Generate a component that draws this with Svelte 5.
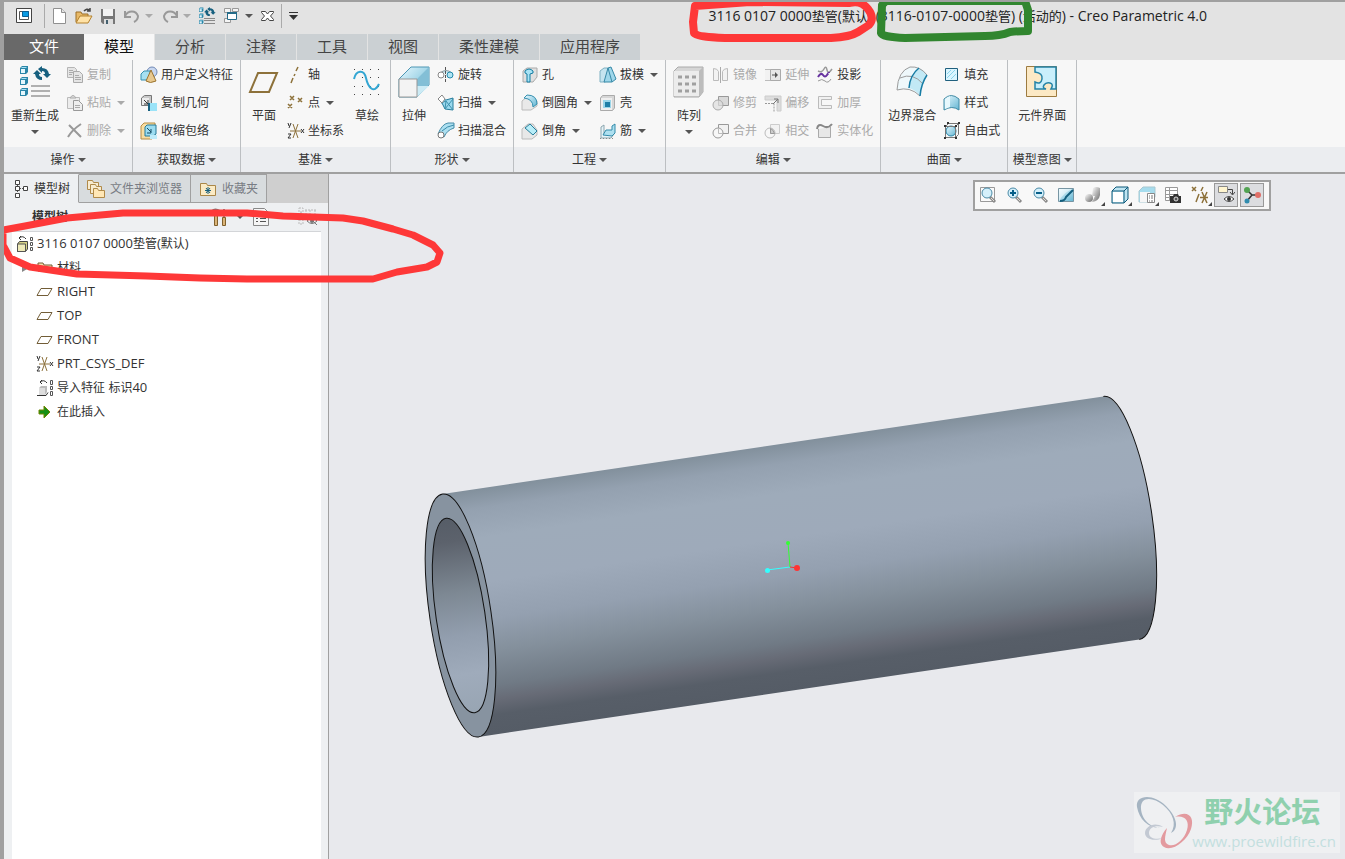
<script lang="ts">
    type Item = { icon: string; label: string; menu?: boolean; off?: boolean };
    type Block = { big?: Item; rows?: Item[] };
    type Group = { name: string; blocks: Block[] };

    const ribbonTabs = ['文件', '模型', '分析', '注释', '工具', '视图', '柔性建模', '应用程序'];
    let activeTab = $state('模型');

    const groups: Group[] = [
        {
            name: '操作',
            blocks: [
                { big: { icon: 'regen', label: '重新生成', menu: true } },
                { rows: [
                    { icon: 'copy', label: '复制', off: true },
                    { icon: 'paste', label: '粘贴', menu: true, off: true },
                    { icon: 'remove', label: '删除', menu: true, off: true }
                ] }
            ]
        },
        {
            name: '获取数据',
            blocks: [
                { rows: [
                    { icon: 'udf', label: '用户定义特征' },
                    { icon: 'copyGeom', label: '复制几何' },
                    { icon: 'shrink', label: '收缩包络' }
                ] }
            ]
        },
        {
            name: '基准',
            blocks: [
                { big: { icon: 'planeBig', label: '平面' } },
                { rows: [
                    { icon: 'axis', label: '轴' },
                    { icon: 'points', label: '点', menu: true },
                    { icon: 'csys', label: '坐标系' }
                ] },
                { big: { icon: 'sketch', label: '草绘' } }
            ]
        },
        {
            name: '形状',
            blocks: [
                { big: { icon: 'extrude', label: '拉伸' } },
                { rows: [
                    { icon: 'revolve', label: '旋转' },
                    { icon: 'sweep', label: '扫描', menu: true },
                    { icon: 'sweptBlend', label: '扫描混合' }
                ] }
            ]
        },
        {
            name: '工程',
            blocks: [
                { rows: [
                    { icon: 'hole', label: '孔' },
                    { icon: 'round', label: '倒圆角', menu: true },
                    { icon: 'chamfer', label: '倒角', menu: true }
                ] },
                { rows: [
                    { icon: 'draft', label: '拔模', menu: true },
                    { icon: 'shell', label: '壳' },
                    { icon: 'rib', label: '筋', menu: true }
                ] }
            ]
        },
        {
            name: '编辑',
            blocks: [
                { big: { icon: 'pattern', label: '阵列', menu: true } },
                { rows: [
                    { icon: 'mirror', label: '镜像', off: true },
                    { icon: 'trim', label: '修剪', off: true },
                    { icon: 'merge', label: '合并', off: true }
                ] },
                { rows: [
                    { icon: 'extend', label: '延伸', off: true },
                    { icon: 'offset', label: '偏移', off: true },
                    { icon: 'intersect', label: '相交', off: true }
                ] },
                { rows: [
                    { icon: 'project', label: '投影' },
                    { icon: 'thicken', label: '加厚', off: true },
                    { icon: 'solidify', label: '实体化', off: true }
                ] }
            ]
        },
        {
            name: '曲面',
            blocks: [
                { big: { icon: 'boundary', label: '边界混合' } },
                { rows: [
                    { icon: 'fill', label: '填充' },
                    { icon: 'style', label: '样式' },
                    { icon: 'freestyle', label: '自由式' }
                ] }
            ]
        },
        {
            name: '模型意图',
            blocks: [{ big: { icon: 'interface', label: '元件界面' } }]
        }
    ];

    const treeItems = [
        { icon: 'planeSmall', label: 'RIGHT' },
        { icon: 'planeSmall', label: 'TOP' },
        { icon: 'planeSmall', label: 'FRONT' },
        { icon: 'csys', label: 'PRT_CSYS_DEF' },
        { icon: 'imported', label: '导入特征 标识40' },
        { icon: 'insert', label: '在此插入' }
    ];

    const viewTools = [
        { icon: 'refit', label: '重新调整' },
        { icon: 'zoomIn', label: '放大' },
        { icon: 'zoomOut', label: '缩小' },
        { icon: 'repaint', label: '重画' },
        { icon: 'render', label: '渲染', menu: true },
        { icon: 'display', label: '显示样式', menu: true },
        { icon: 'saved', label: '已保存方向', menu: true },
        { icon: 'viewMgr', label: '视图管理器' },
        { icon: 'datums', label: '基准显示', menu: true },
        { icon: 'notes', label: '注释显示', on: true },
        { icon: 'spin', label: '旋转中心', on: true }
    ];

    // small glyphs are 18x18, the ones for tall buttons 32x32
    const cube = (x: number, y: number) =>
        `<path d="M${x} ${y + 2}l2-2h6v6l-2 2h-6z" fill="#2a86a8"/><path d="M${x + 1} ${y + 3}h4v4h-4z" fill="#e4f7fd"/><path d="M${x + 1} ${y + 2}l1-1h5l-1 1z" fill="#a5dff3"/>`;
    const recycle = '<path d="M0 8L4 4 8 8H6Q6 11 9 11V14Q3 14 2 8zM18 8L14 12 10 8H12Q12 5 9 5V7L5 3 9 0V2Q15 2 16 8z" fill="#17607f"/>';
    const lens = '<path d="M11 11l5 5" stroke="#8a8a8a" stroke-width="3"/><path d="M12 12l3 3" stroke="#e0dcd6"/><circle cx="8" cy="7" r="5" fill="#d5f0fb" stroke="#4a8aa6"/>';

    const icons: Record<string, string> = {
        app: '<path d="M1.500 1.500h15v14h-15z" fill="#fff" stroke="#444"/><path d="M4.500 4.500h9v8h-9z" fill="#fff" stroke="#555"/><path d="M7.500 4.500h6v5h-6z" fill="#0a9be3" stroke="#0b5f94"/>',
        file: '<path d="M2.500 1.500h8l4 4v11h-12z" fill="#fff" stroke="#909090"/><path d="M10.500 1.500v4h4" fill="#e5e5e5" stroke="#909090"/>',
        open: '<path d="M1 15V5h5l1 2h6v3" fill="#e8b967" stroke="#9b6f27"/><path d="M1 16l4-7h12l-4 7z" fill="#ffe2a6" stroke="#b4822f"/><path d="M9 4q3-3 5-1M15 1v3h-3" fill="none" stroke="#444" stroke-width="1.500"/>',
        save: '<path d="M2 2h14v15H4l-2-2z" fill="#777"/><path d="M4 2h10v7H4z" fill="#f2f2f2"/><path d="M5 12h9v5H5z" fill="#ddd"/><path d="M7 13h2v4H7z" fill="#44606f"/>',
        undo: '<path d="M2 4v6h6" fill="none" stroke="#999" stroke-width="2"/><path d="M2 9C5 3 13 3 15 9q0 4-4 6" fill="none" stroke="#999" stroke-width="2"/>',
        redo: '<path d="M16 4v6h-6" fill="none" stroke="#999" stroke-width="2"/><path d="M16 9C13 3 5 3 3 9q0 4 4 6" fill="none" stroke="#999" stroke-width="2"/>',
        regenSmall: `<g transform="scale(.55)">${cube(0, 1)}${cube(0, 12)}${cube(0, 23)}</g><g transform="translate(5 0) scale(.65)">${recycle}</g><path d="M5 11.500h11M5 13.500h11M5 16.500h11" stroke="#888"/>`,
        windows: '<path d="M1.500 1.500h6v4h-6zM1.500 11.500h6v4h-6zM9.500 1.500h6v3h-6z" fill="#f5f5f5" stroke="#999"/><path d="M4.500 5.500h9v7h-9z" fill="#fff" stroke="#246b88"/><path d="M4 6h10" stroke="#246b88" stroke-width="2"/>',
        close: '<path d="M2.500 4.500h4L8.500 7l2-2.500h4v1L11.500 9l3 3.500v1h-4l-2-2.500-2 2.500h-4v-1L5.500 9l-3-3.500z" fill="#fff" stroke="#444"/>',
        menu: '<path d="M1 5.500h9" stroke="#333"/><path d="M1 8h9l-4.500 5z" fill="#333"/>',
        regen: `${cube(1, 0)}${cube(1, 11)}${cube(1, 22)}<g transform="translate(14)">${recycle}</g><path d="M12 20h19M12 25h19M12 30h19" stroke="#999" stroke-width="1.500"/>`,
        copy: '<path d="M1.500 1.500h7l2 2v8h-9z" fill="#e5e5e5" stroke="#b5b5b5"/><path d="M7.500 5.500h6l3 3v8h-9z" fill="#e5e5e5" stroke="#aaa"/><path d="M3 4.500h4M3 6.500h4M3 8.500h3M9 9.500h4M9 11.500h6M9 13.500h6" stroke="#aaa"/>',
        paste: '<path d="M1.500 3.500h12v11h-12z" fill="#ececec" stroke="#bbb"/><path d="M4 4q3-5 6 0z" fill="#ddd" stroke="#aaa"/><path d="M7.500 6.500h5l4 4v6h-9z" fill="#eee" stroke="#999"/><path d="M9 11.500h5M9 13.500h5" stroke="#aaa"/>',
        remove: '<path d="M3 3l12 12M15 2Q6 8 2 15" stroke="#999" stroke-width="2" fill="none"/>',
        udf: '<circle cx="12" cy="6" r="5" fill="#c9d7ef" stroke="#7089b5"/><path d="M1 8l3-3h6v7l-3 2H1z" fill="#a6e0f1" stroke="#3590b0"/><path d="M11 4L6 15q4 3 10 0z" fill="#e8c88e" stroke="#9b742f"/>',
        copyGeom: '<path d="M1.500 4l3-2.500h7V9l-3 2.500h-7z" fill="#c9c9c9" stroke="#777"/><path d="M2 4h7v7H2z" fill="#ededed"/><path d="M4 6l4 4M8 6v4H4" stroke="#333" fill="none"/><path d="M9 9h8v8H9z" fill="#9be3f8"/><path d="M9 9v8" stroke="#17607f" stroke-width="2"/>',
        shrink: '<path d="M1 4l3-3h11v12l-3 4H1z" fill="#f8dda1" stroke="#b58d45"/><path d="M5 5l2-2h9v9l-3 2H5z" fill="#9bdcf0" stroke="#257a9a"/><path d="M7 6l4 4M11 7v4H7" stroke="#124b63" fill="none"/><path d="M10 13h7v4h-7z" fill="#bdebf9"/>',
        planeBig: '<path d="M10 7h19l-8 19H2z" fill="none" stroke="#8d713a" stroke-width="2"/>',
        planeSmall: '<path d="M5 5.500h11l-4 7H1z" fill="none" stroke="#725d37"/>',
        axis: '<path d="M11 1L9 5M8 8l-1 2M6 12l-2 5" stroke="#8d713a" stroke-width="1.500"/>',
        points: '<path d="M3 2l4 4M7 2L3 6M11 4l4 4M15 4l-4 4M1 10l4 4M5 10l-4 4" stroke="#8d713a" stroke-width="1.500"/>',
        csys: '<path d="M3 9h11M6 2l5 14M11 2L6 16" stroke="#8d713a" fill="none"/><path d="M1 1l1 3M4 1L2 6M1 12h3l-3 4h3M14 7l3 4M17 7l-3 4" stroke="#333" fill="none"/>',
        sketch: '<path d="M3 3.500h27M3 11.500h27M3 20.500h27M3 28.500h27" stroke="#444" stroke-dasharray="1 7"/><path d="M3 13C5 4 13 3 15 12S23 29 28 18" fill="none" stroke="#33a6d3" stroke-width="2"/>',
        extrude: '<path d="M1 13L13 1h18v18L19 31H1z" fill="url(#blue)" stroke="#4d96b3"/><path d="M19 13L31 1v18L19 31z" fill="#83bfd6"/><path d="M19 31V20h12z" fill="#ccebf5"/><path d="M1 13h18v18H1z" fill="#f3f3f3" stroke="#999"/>',
        revolve: '<path d="M3 7q6-5 12 0" fill="#cdeaf4" stroke="#8a9aa0"/><circle cx="4" cy="9" r="3" fill="#fff" stroke="#888"/><circle cx="13" cy="9" r="3" fill="#afe5f5" stroke="#258aaa"/><path d="M8.500 1v16" stroke="#555" stroke-dasharray="3 1"/>',
        sweep: '<path d="M3 5l6 1 7-2v12l-8-1z" fill="#9bd9ee" stroke="#257c9b"/><path d="M4 9l5-2 7 9M9 7l-1 8 8-10" fill="none" stroke="#3e91ad"/><path d="M1 5l4-4 3 4-3 4z" fill="#fff" stroke="#888"/>',
        sweptBlend: '<path d="M1 12Q5 2 11 1h6v5q-7 2-10 9z" fill="#acdff0" stroke="#468da9"/><path d="M5 9Q10 4 17 3" fill="none" stroke="#398caa"/><circle cx="4" cy="13" r="3" fill="#fff" stroke="#777"/>',
        hole: '<path d="M2 5l4-3h10v9l-4 5H2z" fill="#e0e0e0" stroke="#aaa"/><path d="M4 5q4-4 8 0v2L9 8v8H6V8L4 7z" fill="#a8e3f5" stroke="#147da2"/>',
        round: '<path d="M1 7l6-5h4l5 5v5l-6 4H1z" fill="#e9e9e9" stroke="#bbb"/><path d="M6 1q10 0 10 9l-4 3Q12 5 3 4z" fill="url(#blue)" stroke="#3590b0"/>',
        chamfer: '<path d="M1 7l6-5h5l4 6v5l-5 4H1z" fill="#e8e8e8" stroke="#bbb"/><path d="M9 2l7 7-4 4-8-7z" fill="#b8edf8" stroke="#287f9c"/>',
        draft: '<path d="M1 5l4-3h4v12l-3 2H1z" fill="#c5e4ef" stroke="#7fb0c2"/><path d="M9 2l3-1 5 12-4 3H5z" fill="#9fd7ea" stroke="#3789a7"/><path d="M9 2l4 14" fill="none" stroke="#3789a7"/>',
        shell: '<path d="M1.500 4l2-2.500h12V14l-2 2.500h-12z" fill="#d6d6d6" stroke="#aaa"/><path d="M2 4h11v12H2z" fill="#efefef"/><path d="M4 6h8v8H4z" fill="#9ad5e9"/><path d="M6 8h5v5H6z" fill="#1f7ea6"/>',
        rib: '<path d="M2 15V5l3-2v9h10l-3 4H2z" fill="#e6f3f8" stroke="#8ba5ae"/><path d="M4 13l3-5h6V4l3-2v9l-3 3z" fill="#aee0f0" stroke="#328baa"/><path d="M1 16.500h15" stroke="#888" stroke-dasharray="1 2"/>',
        pattern: '<path d="M1 5l4-4h25v25l-4 5H1z" fill="#d6d6d6" stroke="#aaa"/><path d="M1 5h25v25H1z" fill="#ececec"/><path d="M26 5l4-4v25l-4 5z" fill="#bcbcbc"/><path d="M5 11h4M12 11h4M19 11h4M5 18h4M12 18h4M19 18h4M5 25h4M12 25h4M19 25h4" stroke="#a0a0a0" stroke-width="3"/>',
        mirror: '<path d="M1.500 2.500q4 0 5 3v9h-5zM15.500 2.500q-4 0-5 3v9h5z" fill="#f2f2f2" stroke="#bbb"/><path d="M8.500 1v16" stroke="#aaa"/>',
        trim: '<path d="M6.500 2.500h10v9h-10z" fill="#d9d9d9" stroke="#999"/><circle cx="6" cy="11" r="5" fill="#ddd" fill-opacity=".7" stroke="#aaa"/>',
        merge: '<path d="M6.500 2.500h10v9h-10z" fill="#f1f1f1" stroke="#999"/><circle cx="6" cy="11" r="5" fill="#f7f7f7" stroke="#999"/><path d="M6.500 7v4.500h4" fill="none" stroke="#bbb"/>',
        extend: '<path d="M1 3.500h6v11H1" fill="#f2f2f2" stroke="#bbb"/><path d="M6.500 3.500h10v11h-10z" fill="#e7e7e7" stroke="#aaa"/><path d="M8 9h4" stroke="#555"/><path d="M11 6l3 3-3 3z" fill="#555"/>',
        offset: '<path d="M1 2h16v15h-4V6H1z" fill="#ddd" stroke="#ccc"/><path d="M1 9.500h9v8" fill="none" stroke="#999" stroke-dasharray="2 1"/><path d="M9 10l5-5M10 5h4v4" fill="none" stroke="#777"/>',
        intersect: '<path d="M6.500 2.500h9v9h-9z" fill="#f2f2f2" stroke="#ccc"/><circle cx="6" cy="11" r="5" fill="none" stroke="#bbb"/><path d="M6.500 6.500v5h4q-1-4-4-5z" fill="#ccc" stroke="#999"/>',
        project: '<path d="M2 5q4 2 6-2t3 1 5-1" fill="none" stroke="#999" stroke-width="1.500"/><path d="M2 11q3-5 5-2t4 0 2-2" fill="none" stroke="#6732a0" stroke-width="2"/><path d="M2 15q4-3 7 0t6-2" fill="none" stroke="#999"/>',
        thicken: '<path d="M2.500 2.500h13v3h-10v6h10v3h-13z" fill="#f1f1f1" stroke="#bbb"/>',
        solidify: '<path d="M2.500 7v8.500h12V5" fill="#e7e7e7" stroke="#aaa"/><path d="M1 7q1-6 6-3t9-2" fill="none" stroke="#888" stroke-width="2"/>',
        boundary: '<path d="M1 24Q2 5 14 1q10-1 17 8-6 11-7 21Q15 21 1 24z" fill="#eef8fb"/><path d="M24 30Q25 17 31 9 28 4 23 2 14 9 13 22q7 2 11 8z" fill="#c2e9f5"/><path d="M1 24Q2 5 14 1q10-1 17 8M1 24q13-4 23 6M4 12q13-6 23 6" fill="none" stroke="#9b9b9b"/><path d="M24 30Q25 18 31 9M13 22q1-13 10-20" fill="none" stroke="#177ca4" stroke-width="1.500"/>',
        fill: '<path d="M2.500 2.500h12v12h-12z" fill="#d9f5ff" stroke="#20607e"/><path d="M4 8l4-4M4 12l8-8M8 13l5-5" stroke="#8bd4ec"/>',
        style: '<path d="M1 5q7-7 15 0v11q-7-5-15 0z" fill="url(#blue)" stroke="#418ba5"/><path d="M2 5v10l5-2V2z" fill="#e7f8fd"/>',
        freestyle: '<circle cx="8" cy="9" r="5" fill="url(#blue)" stroke="#2784a6"/><path d="M2.500 4.500l3-3h10v11l-3 3h-10zM2.500 4.500h10v11M12.500 4.500l3-3" fill="none" stroke="#777"/><path d="M1 3h2v2H1zM12 3h2v2h-2zM1 15h2v2H1zM12 15h2v2h-2zM4 0h2v2H4zM15 0h2v2h-2z" fill="#333"/>',
        interface: '<path d="M.5.500h30v30H.5z" fill="#fce9c5" stroke="#9d7b40"/><path d="M9 1h21v22h-5q3-5-1-6t-6 2 2 4H9v-7q6 3 7-3T9 6z" fill="#c9effb" stroke="#2383a7" stroke-width="1.500"/>',
        treeTab: '<path d="M3.500.500h4v4h-4zM3.500 6.500h4v4h-4zM3.500 13.500h4v4h-4zM11.500 6.500h4v4h-4z" fill="#fff" stroke="#444"/><path d="M5.500 5v2M5.500 11v3M8 8.500h4" stroke="#555" stroke-dasharray="1 1"/>',
        folders: '<path d="M.5 9.500v-9h5l1 2h5v7z" fill="#f8ecd0" stroke="#b08a49"/><path d="M3.500 13.500v-9h5l1 2h5v7z" fill="#f8ecd0" stroke="#b08a49"/><path d="M6.500 17.500v-9h4l1 2h6v7z" fill="#ffe7b5" stroke="#b08a49"/>',
        favorite: '<path d="M1.500 15.500v-12h6l1 2h8v10z" fill="#fbebc5" stroke="#aa8748"/><path d="M9 7v7M6 10.500h6M7 8l4 5M11 8l-4 5" stroke="#17607f"/>',
        part: '<path d="M1.500 9l2-2.500h8V14l-2 2.500h-8z" fill="#d6d287" stroke="#444"/><path d="M1.500 9h8v7.500h-8z" fill="#eeeab8" stroke="#555"/><path d="M3 3q4-3 7 1M5 1L3 3l2 2" fill="none" stroke="#333"/><path d="M14.500 2.500h2v3h-2zM14.500 7.500h2v3h-2zM14.500 12.500h2v3h-2z" fill="none" stroke="#555"/>',
        imported: '<path d="M3 9l2-2h6v6l-2 3H3z" fill="#bbb"/><path d="M3 9h6v7H3z" fill="#ddd"/><path d="M4 3q4-3 7 1M6 1L4 3l2 2M1 16.500h9l2-3" fill="none" stroke="#333"/><path d="M14.500 1.500h2v4h-2zM14.500 7.500h2v3h-2zM14.500 12.500h2v4h-2z" fill="none" stroke="#555"/>',
        insert: '<path d="M3 7h5V3l6 6-6 6v-4H3z" fill="#169016" stroke="#6f8500"/>',
        material: '<path d="M2 12V4h5l1 2h8v7z" fill="#f2dfa8" stroke="#725d37"/>',
        tools: '<path d="M2 3q3-3 8 0M6 3v3" stroke="#777" fill="none" stroke-width="2"/><path d="M4.500 5.500h3v12h-3zM12.500 9.500h3v8h-3z" fill="#d9b377" stroke="#80602c"/><path d="M14 1v8" stroke="#888" stroke-width="2"/>',
        list: '<path d="M1.500.500h11l4 4v13h-15z" fill="#f5f5f5" stroke="#888"/><path d="M4 10.500h2M4 13.500h2M8 10.500h6M8 13.500h6M4 6.500h8" stroke="#555"/>',
        hidden: '<path d="M1 1h4v4H1zM1 13h4v4H1zM3 5v8M7 3h12M8 3v10M12 3v6M17 3v5" fill="none" stroke="#bbb" stroke-dasharray="2 1"/><path d="M9 14q5-6 10 0-5 5-10 0zM10 9l9 9" fill="none" stroke="#777"/><circle cx="14" cy="14" r="2" fill="#777"/>',
        refit: '<path d="M1.500 1.500h14v14h-14z" fill="#fafafa" stroke="#999"/>' + lens,
        zoomIn: lens + '<path d="M5 7h6M8 4v6" stroke="#075f89" stroke-width="2"/>',
        zoomOut: lens + '<path d="M5 7h6" stroke="#075f89" stroke-width="2"/>',
        repaint: '<path d="M1.500 2.500h15v13h-15z" fill="url(#blue)" stroke="#7795a3"/><path d="M2 3h14Q8 5 2 15z" fill="#fff" fill-opacity=".5"/><path d="M3 15q5 0 6-4l7-7" fill="none" stroke="#14607f" stroke-width="2"/>',
        render: '<circle cx="5" cy="12" r="4" fill="url(#steel)"/><path d="M9 2q3-2 7 0v7q-1 6-8 7l3-6H8z" fill="url(#steel)"/>',
        display: '<path d="M1 5l4-4h12v12l-4 4H1z" fill="#bfe5f2" stroke="#0d5879"/><path d="M1 5h12v12M13 5l4-4" fill="none" stroke="#0d5879"/><path d="M2 6h10v10H2z" fill="#fff"/>',
        saved: '<path d="M1 5l4-4h12v10l-4 5H1z" fill="#a6dced" stroke="#a7c8d1"/><path d="M2 6h10v10H2z" fill="#f6f6f6"/><path d="M9.500 7.500h7v9h-7z" fill="#fff" stroke="#888"/><path d="M11 10h1M11 12h1M11 15h1M13 10h2M13 12h2M13 15h2" stroke="#777"/>',
        viewMgr: '<path d="M1.500 1.500h12v13h-12zM1 4.500h13M5.500 1v14M1 8.500h13M1 11.500h13" fill="#fff" stroke="#999"/><path d="M6 10h3l1-2h4l1 2h2v7H6z" fill="#333"/><circle cx="12" cy="13" r="2" fill="#555" stroke="#ddd"/>',
        datums: '<path d="M1 1l4 4M5 1L1 5M12 1l-2 4M8 8l-3 8M9 11.500h8M11 6l5 11M16 6l-5 11" stroke="#8d713a" stroke-width="1.500"/>',
        notes: '<path d="M1.500.500h9v6h-9z" fill="#fff5cf" stroke="#888"/><path d="M11 3.500h4.500V8M13 6l2.500 3L18 6" fill="none" stroke="#444"/><path d="M7 13q5-5 10 0-5 5-10 0z" fill="#fff" stroke="#444"/><circle cx="12" cy="13" r="2" fill="#333"/>',
        spin: '<path d="M4 4l5 5-5 6M9 9h7" fill="none" stroke="#333" stroke-width="1.500"/><circle cx="4" cy="4" r="3" fill="#52a352"/><circle cx="4" cy="15" r="2.500" fill="#318cae"/><circle cx="15" cy="9" r="3" fill="#e06f68"/>'
    };

    // latin and CJK runs have different optical sizes
    function runs(text: string) {
        return text.split(/([\u4e00-\u9fff]+)/).filter((t) => t);
    }
</script>

{#snippet glyph(name: string, size = 18)}
    <svg width={size} height={size} viewBox="0 0 {size} {size}" aria-hidden="true">{@html icons[name]}</svg>
{/snippet}

{#snippet mixed(text: string)}
    <span>{#each runs(text) as run}{#if /[\u4e00-\u9fff]/.test(run)}{run}{:else}<span class="latin">{run}</span>{/if}{/each}</span>
{/snippet}

<svg class="defs" aria-hidden="true">
    <linearGradient id="blue" x1="0" y1="0" x2="1" y2="1">
        <stop offset="0" stop-color="#e9f9ff" />
        <stop offset="1" stop-color="#62b5d2" />
    </linearGradient>
    <linearGradient id="steel" x1="0" y1="0" x2="1" y2="1">
        <stop offset="0" stop-color="#fff" />
        <stop offset="1" stop-color="#666" />
    </linearGradient>
</svg>

<div class="window">
    <header class="titlebar">
        <button class="quick app" aria-label="窗口">{@render glyph('app')}</button>
        <i class="sep"></i>
        <button class="quick" aria-label="新建">{@render glyph('file')}</button>
        <button class="quick" aria-label="打开">{@render glyph('open')}</button>
        <button class="quick" aria-label="保存">{@render glyph('save')}</button>
        <button class="quick drop" aria-label="撤消" disabled>{@render glyph('undo')}<i class="caret"></i></button>
        <button class="quick drop" aria-label="重做" disabled>{@render glyph('redo')}<i class="caret"></i></button>
        <button class="quick" aria-label="重新生成">{@render glyph('regenSmall')}</button>
        <button class="quick drop" aria-label="窗口列表">{@render glyph('windows')}<i class="caret"></i></button>
        <button class="quick close" aria-label="关闭">{@render glyph('close')}</button>
        <i class="sep"></i>
        <button class="quick" aria-label="自定义">{@render glyph('menu')}</button>
        <h1>{@render mixed('3116 0107 0000垫管(默认) (3116-0107-0000垫管) (活动的) - Creo Parametric 4.0')}</h1>
    </header>

    <nav class="tabs">
        {#each ribbonTabs as tab}
            <button class:file={tab === '文件'} class:active={tab === activeTab} onclick={() => (activeTab = tab)}>{tab}</button>
        {/each}
    </nav>

    <div class="ribbon">
        {#each groups as group}
            <section class="group">
                <div class="tools">
                    {#each group.blocks as block}
                        {#if block.big}
                            <button class="big">
                                {@render glyph(block.big.icon, 32)}
                                <span>{block.big.label}</span>
                                {#if block.big.menu}<i class="caret"></i>{/if}
                            </button>
                        {:else if block.rows}
                            <div class="rows">
                                {#each block.rows as item}
                                    <button class="small" disabled={item.off}>
                                        {@render glyph(item.icon)}
                                        <span>{item.label}</span>
                                        {#if item.menu}<i class="caret"></i>{/if}
                                    </button>
                                {/each}
                            </div>
                        {/if}
                    {/each}
                </div>
                <button class="group-name">{group.name}<i class="caret"></i></button>
            </section>
        {/each}
        <div class="rest"></div>
    </div>

    <main>
        <aside>
            <div class="side-tabs">
                <button class="active">{@render glyph('treeTab')}模型树</button>
                <button>{@render glyph('folders')}文件夹浏览器</button>
                <button>{@render glyph('favorite')}收藏夹</button>
            </div>
            <div class="side-head">
                <h2>模型树</h2>
                <button class="settings" aria-label="设置">{@render glyph('tools')}<i class="caret"></i></button>
                <button aria-label="显示">{@render glyph('list')}</button>
                <button class="last" aria-label="隐藏" disabled>{@render glyph('hidden', 20)}</button>
            </div>
            <ul>
                <li class="root">{@render glyph('part')}{@render mixed('3116 0107 0000垫管(默认)')}</li>
                <li class="folder"><i class="twisty"></i>{@render glyph('material')}<span>材料</span></li>
                {#each treeItems as item}
                    <li>{@render glyph(item.icon)}{@render mixed(item.label)}</li>
                {/each}
            </ul>
        </aside>

        <div class="canvas">
            <svg class="model" width="750" height="360" viewBox="420 385 750 360" role="img" aria-label="垫管">
                <defs>
                    <linearGradient id="outer" gradientUnits="userSpaceOnUse" x1="0" y1="-123" x2="0" y2="123">
                        <stop offset="0" stop-color="#82909c" />
                        <stop offset=".08" stop-color="#94a1b0" />
                        <stop offset=".2" stop-color="#9eabba" />
                        <stop offset=".38" stop-color="#9eaaba" />
                        <stop offset=".53" stop-color="#94a0b0" />
                        <stop offset=".66" stop-color="#84909c" />
                        <stop offset=".8" stop-color="#707a85" />
                        <stop offset=".86" stop-color="#676b76" />
                        <stop offset=".92" stop-color="#575e68" />
                        <stop offset="1" stop-color="#555c66" />
                    </linearGradient>
                    <linearGradient id="inner" gradientUnits="userSpaceOnUse" x1="0" y1="-98" x2="0" y2="98">
                        <stop offset="0" stop-color="#565d67" />
                        <stop offset=".12" stop-color="#5c626c" />
                        <stop offset=".38" stop-color="#7d8893" />
                        <stop offset=".6" stop-color="#929eae" />
                        <stop offset=".8" stop-color="#9fabbb" />
                        <stop offset="1" stop-color="#98a5b3" />
                    </linearGradient>
                </defs>
                <g transform="translate(460.500 615.500) rotate(-8.4)">
                    <path d="M0-122.800H668A30.700 122.800 0 0 1 668 122.800H0z" fill="url(#outer)" />
                    <path d="M668-122.800A30.700 122.800 0 0 1 668 122.800" fill="none" stroke="#111" />
                    <ellipse rx="30.700" ry="122.800" fill="#8793a0" stroke="#111" />
                    <ellipse rx="24.500" ry="98.200" fill="url(#inner)" stroke="#111" />
                </g>
                <path d="M790 567l-23 3" stroke="#3ff" />
                <path d="M790 567l-2-24" stroke="#3f3" />
                <path d="M790 567l7 1" stroke="#e33" />
                <circle cx="767.500" cy="570.500" r="2.500" fill="#3ff" />
                <circle cx="788" cy="543" r="2" fill="#3f3" />
                <circle cx="797" cy="568" r="3" fill="#f33" />
            </svg>

            <div class="view-tools">
                {#each viewTools as tool}
                    <button class:on={tool.on} class:fly={tool.menu} aria-label={tool.label}>{@render glyph(tool.icon)}</button>
                {/each}
            </div>

            <div class="watermark">
                <svg width="62" height="62" viewBox="0 0 62 62" aria-hidden="true">
                    <path d="M3 15C1 3 19 1 32 14s12 24 5 27c6-9 2-20-8-28S6 4 7 17s13 19 19 19C14 36 5 27 3 15z" fill="#a5b4c2" />
                    <path d="M41 25c13-8 20 0 16 12S38 60 30 55s1-17 3-19c-2 9-4 15 2 17s15-5 18-15-3-15-12-13z" fill="#e39a9f" />
                    <path d="M29 35c-9-6-18 0-18 6s9 9 18 5c-8 2-14 0-14-5s6-8 14-6z" fill="#c3c9d3" />
                </svg>
                <div>
                    <strong>野火论坛</strong>
                    <a href="http://www.proewildfire.cn">www.proewildfire.cn</a>
                </div>
            </div>
        </div>
    </main>

    <svg class="marks" width="1100" height="290" viewBox="0 0 1100 290" aria-hidden="true">
        <g fill="none" stroke-linecap="round" stroke-linejoin="round">
            <path d="M695 6L693 22 694 33Q697 37 725 38H831Q850 37 858 32L869 25Q875 18 868 9T850 3L750 2z" stroke="#fe3838" stroke-width="8" />
            <path d="M882 5L881 33Q882 37 905 38L985 36Q1000 36 1010 32 1020 31 1028 31L1028 10 1025 1H886z" stroke="#31862f" stroke-width="8" />
            <path d="M3 230L25 226 67 218 123 213H247L283 216 343 218 363 221 393 229 413 235 433 245 440 253 437 262 427 267 397 272 373 279H247L200 278 147 276 77 274 30 267 10 258 3 245z" stroke="#fe3838" stroke-width="7" />
        </g>
    </svg>
</div>

<style>
    :global(body) {
        margin: 0;
    }
    .window {
        position: relative;
        box-sizing: border-box;
        display: flex;
        flex-direction: column;
        min-height: 100vh;
        overflow: hidden;
        border-top: 2px solid #a0a0a0;
        border-left: 4px solid #a0a0a0;
        background: #e3e3e3;
        color: #333;
        font: 12px/16px "Open Sans", "Noto Sans CJK SC", sans-serif;
    }
    .defs {
        position: absolute;
        width: 0;
        height: 0;
    }
    button {
        display: flex;
        align-items: center;
        padding: 0;
        border: 0;
        background: none;
        color: inherit;
        font: inherit;
        white-space: nowrap;
    }
    button:disabled {
        color: #aaa;
    }
    svg {
        display: block;
        flex: none;
    }
    .latin {
        font-size: 13px;
        line-height: 0;
    }
    .caret {
        border: 4px solid transparent;
        border-top-color: #555;
        border-bottom: 0;
    }
    button:disabled .caret {
        border-top-color: #aaa;
    }

    .titlebar {
        display: flex;
        align-items: center;
        gap: 6px;
        height: 32px;
        padding: 0 138px 4px 11px;
        box-sizing: border-box;
    }
    .app {
        padding-right: 5px;
    }
    .drop .caret {
        margin: 0 2px 0 4px;
    }
    .close {
        justify-content: center;
        width: 14px;
    }
    .sep {
        width: 1px;
        height: 24px;
        background: #aaa;
    }
    h1 {
        margin: 0 0 0 auto;
        color: #222;
        font-size: 13px;
        font-weight: normal;
        white-space: nowrap;
    }
    h1 .latin {
        font-size: 14px;
    }

    .tabs {
        display: flex;
        gap: 1px;
        height: 26px;
    }
    .tabs button {
        padding: 0 20px 2px;
        background: #cbd0d3;
        color: #444;
        font-size: 15px;
    }
    .tabs .file {
        padding: 0 25px 2px;
        margin-right: -1px;
        background: #696969;
        color: #fff;
    }
    .tabs .active {
        background: #f7f7f7;
        color: #111;
    }

    .ribbon {
        display: flex;
        height: 112px;
        border-bottom: 2px solid #a0a0a0;
        background: #f7f7f7;
    }
    .group {
        display: flex;
        flex-direction: column;
        border-right: 1px solid #bcbfc2;
    }
    .tools {
        display: flex;
        flex: 1;
        gap: 7px;
        padding: 0 7px;
    }
    .group:last-of-type .tools {
        padding: 0 10px;
    }
    .rows {
        padding-top: 1px;
    }
    .small {
        gap: 3px;
        height: 28px;
    }
    .small .caret {
        margin-left: 3px;
    }
    .big {
        flex-direction: column;
        min-width: 32px;
        padding-top: 6px;
    }
    .big span {
        margin-top: 10px;
    }
    .big .caret {
        margin-top: 6px;
    }
    .group-name {
        justify-content: center;
        gap: 3px;
        height: 25px;
        background: #ebedf0;
    }
    .rest {
        flex: 1;
        align-self: flex-end;
        height: 25px;
        background: #ebedf0;
    }

    main {
        display: flex;
        flex: 1;
    }
    aside {
        display: flex;
        flex-direction: column;
        width: 324px;
        border-right: 1px solid #a0a0a0;
        background: #eef0f2;
    }
    .side-tabs {
        display: flex;
        height: 29px;
        background: #cfcfcf;
    }
    .side-tabs button {
        gap: 4px;
        padding: 0 8px;
        border: 1px solid #a0a0a0;
        border-width: 1px 1px 1px 0;
        background: #d8dcde;
        color: #787c84;
    }
    .side-tabs button + button {
        gap: 5px;
    }
    .side-tabs .active {
        border-color: #eef0f2;
        border-right-color: #a0a0a0;
        background: #eef0f2;
        color: #333;
    }
    .side-head {
        display: flex;
        align-items: center;
        gap: 8px;
        height: 28px;
        padding: 0 10px 0 28px;
    }
    h2 {
        flex: 1;
        margin: 0;
        font-size: 12px;
        font-weight: bold;
    }
    .settings .caret {
        margin-left: 8px;
    }
    .last {
        margin-left: 20px;
    }
    ul {
        flex: 1;
        margin: 0 7px 0 8px;
        padding: 0;
        border-top: 1px solid #d3d5d8;
        background: #fff;
        list-style: none;
    }
    li {
        display: flex;
        align-items: center;
        gap: 3px;
        height: 24px;
        padding-left: 24px;
    }
    .root {
        padding-left: 4px;
    }
    .folder {
        padding-left: 10px;
    }
    .twisty {
        margin-right: 4px;
        border: 4px solid transparent;
        border-left: 7px solid #888;
        border-right: 0;
    }

    .canvas {
        position: relative;
        flex: 1;
        overflow: hidden;
        background: #e8e9ed;
    }
    .model {
        position: absolute;
        top: 211px;
        left: 91px;
    }
    .view-tools {
        position: absolute;
        top: 6px;
        right: 74px;
        display: flex;
        gap: 2px;
        padding: 1px 5px 2px 1px;
        border: 2px solid #a0a0a0;
        background: #f8f8f8;
    }
    .view-tools button {
        position: relative;
        justify-content: center;
        box-sizing: border-box;
        width: 24px;
        height: 24px;
    }
    .view-tools .fly {
        width: 25px;
    }
    .view-tools .fly::after {
        content: "";
        position: absolute;
        right: 0;
        bottom: 1px;
        border: 2px solid #444;
        border-top-color: transparent;
        border-left-color: transparent;
    }
    .view-tools .on {
        border: 1px solid #999;
        background: #dcdde0;
    }
    .watermark {
        position: absolute;
        right: 5px;
        bottom: 6px;
        display: flex;
        height: 61px;
        padding-right: 4px;
        background: #eff0f2;
    }
    .watermark div {
        display: flex;
        flex-direction: column;
        margin-left: -4px;
    }
    .watermark strong {
        margin: 2px 0 0 12px;
        color: #8fd0ae;
        font-size: 29px;
        line-height: 36px;
    }
    .watermark a {
        color: #c3dfdf;
        font-size: 15px;
        line-height: 22px;
        text-decoration: none;
    }

    .marks {
        position: absolute;
        top: -2px;
        left: -4px;
        pointer-events: none;
    }
</style>
